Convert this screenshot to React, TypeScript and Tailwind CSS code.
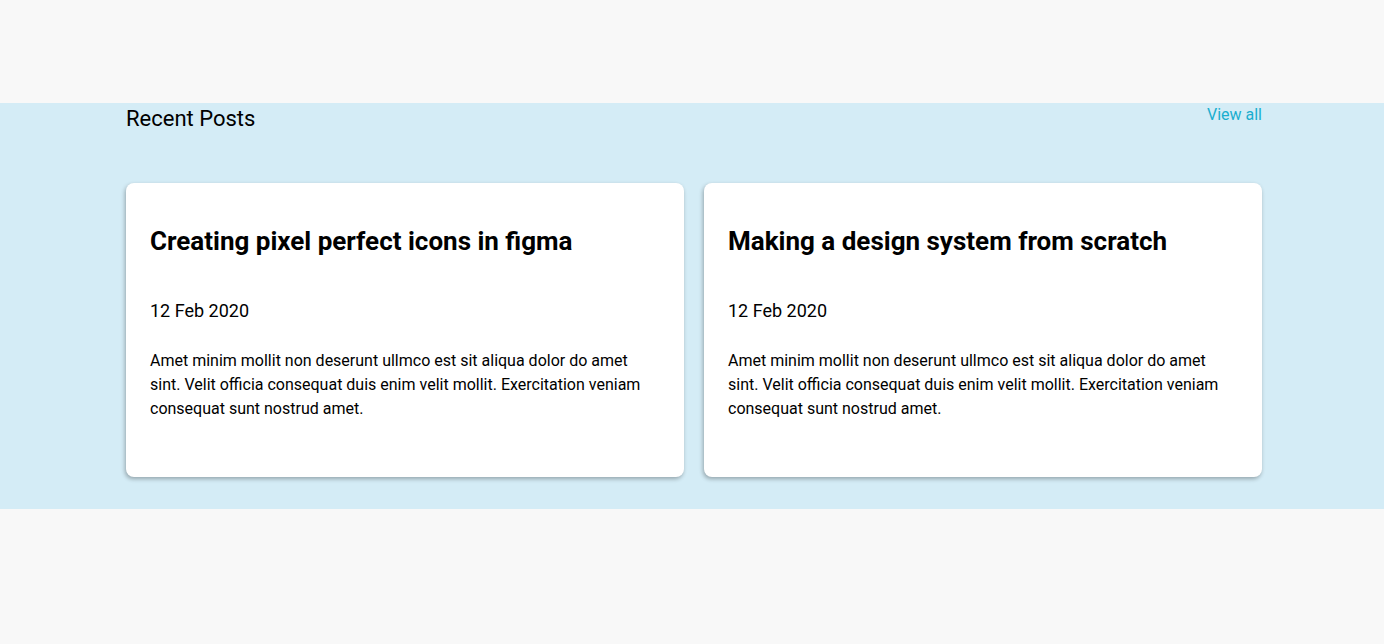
const posts = [
  {
    title: "Creating pixel perfect icons in figma",
    date: "12 Feb 2020",
    body: "Amet minim mollit non deserunt ullmco est sit aliqua dolor do amet sint. Velit officia consequat duis enim velit mollit. Exercitation veniam consequat sunt nostrud amet.",
  },
  {
    title: "Making a design system from scratch",
    date: "12 Feb 2020",
    body: "Amet minim mollit non deserunt ullmco est sit aliqua dolor do amet sint. Velit officia consequat duis enim velit mollit. Exercitation veniam consequat sunt nostrud amet.",
  },
];

function PostCard({ title, date, body }: { title: string; date: string; body: string }) {
  return (
    <div className="bg-white rounded-lg shadow-[-1px_2px_4px_rgba(0,0,0,0.3)] px-6 pt-10 pb-[56px]">
      <h3 className="text-[26px] leading-9 font-bold text-black">{title}</h3>
      <p className="mt-[38px] text-lg leading-7 text-black">{date}</p>
      <p className="mt-6 text-base leading-6 text-black">{body}</p>
    </div>
  );
}

export default function App() {
  return (
    <div className="min-h-screen bg-[#f8f8f8] pt-[103px] font-['Roboto',sans-serif]">
      {/* Recent posts band */}
      <section className="bg-[#d4ecf6] pb-8">
        <div className="ml-[126px] w-[1136px]">
          <div className="flex items-start justify-between">
            <h2 className="text-[22px] leading-[32px] text-black">Recent Posts</h2>
            <a href="#" className="text-base leading-6 text-[#1aaecf]">View all</a>
          </div>
          <div className="mt-12 grid grid-cols-2 gap-5">
            {posts.map((p) => (
              <PostCard key={p.title} {...p} />
            ))}
          </div>
        </div>
      </section>
    </div>
  );
}
